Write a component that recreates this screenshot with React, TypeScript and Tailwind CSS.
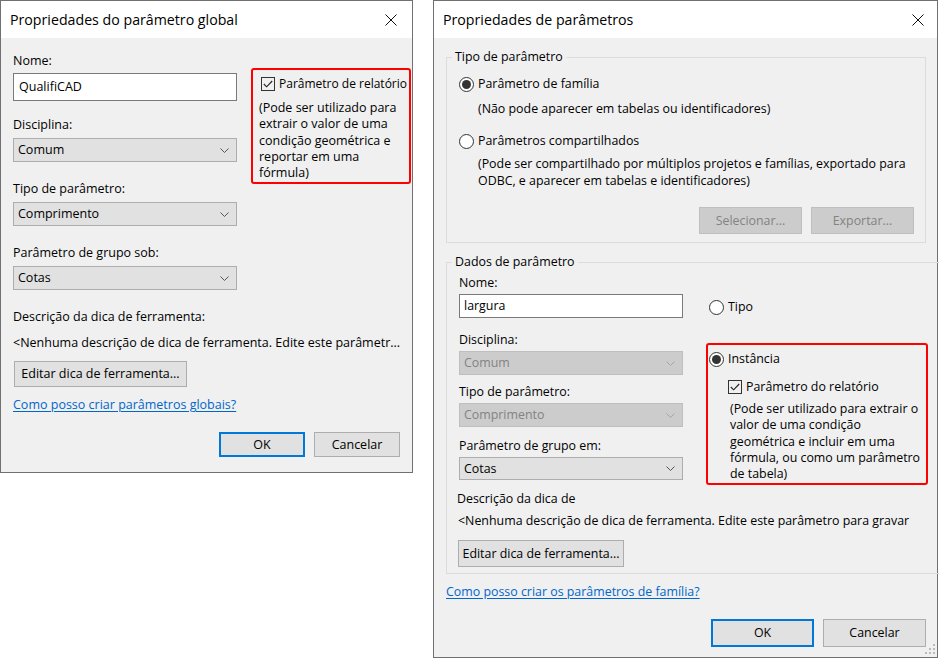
import cx from 'clsx';
import type { ReactNode } from 'react';

const CloseIcon = () => (
  <svg width="12" height="12" viewBox="0 0 12 12" fill="none" stroke="#111" strokeWidth="1">
    <path d="M0.5 0.5 11.5 11.5M11.5 0.5 0.5 11.5" />
  </svg>
);

const TitleBar = ({ title, pr }: { title: string; pr: string }) => (
  <div className={cx('flex h-[37px] shrink-0 items-center justify-between bg-white pl-[9px] text-[14.2px]', pr)}>
    <span>{title}</span>
    <CloseIcon />
  </div>
);

const Checkbox = () => (
  <span className="flex h-[14px] w-[14px] shrink-0 items-center justify-center border border-[#333]">
    <svg width="10" height="8" viewBox="0 0 10 8" fill="none" stroke="#222" strokeWidth="1.1">
      <path d="M0.8 4 3.6 6.8 9.2 1" />
    </svg>
  </span>
);

const Radio = ({ checked }: { checked?: boolean }) => (
  <span className="flex h-[15px] w-[15px] shrink-0 items-center justify-center rounded-full border border-[#333] bg-white">
    {checked && <span className="h-[9px] w-[9px] rounded-full bg-[#333]" />}
  </span>
);

const Chevron = ({ disabled }: { disabled?: boolean }) => (
  <svg width="9" height="5" viewBox="0 0 9 5" fill="none" stroke={disabled ? '#a6a6a6' : '#555'} strokeWidth="1">
    <path d="M0.5 0.5 4.5 4.5 8.5 0.5" />
  </svg>
);

interface SelectProps {
  value: string;
  disabled?: boolean;
  className?: string;
}

const Select = ({ value, disabled, className }: SelectProps) => (
  <div
    className={cx(
      'flex items-center justify-between border pl-[4px] pr-[7px]',
      disabled ? 'border-[#bfbfbf] bg-[#cccccc] text-[#838383]' : 'border-[#adadad] bg-[#e1e1e1]',
      className,
    )}
  >
    <span>{value}</span>
    <Chevron disabled={disabled} />
  </div>
);

interface ButtonProps {
  children: ReactNode;
  primary?: boolean;
  disabled?: boolean;
  className?: string;
}

const Button = ({ children, primary, disabled, className }: ButtonProps) => (
  <div
    className={cx(
      'flex items-center justify-center',
      primary && 'border-2 border-[#0078d7] bg-[#e1e1e1]',
      disabled && 'border border-[#bfbfbf] bg-[#cccccc] text-[#838383]',
      !primary && !disabled && 'border border-[#adadad] bg-[#e1e1e1]',
      className,
    )}
  >
    {children}
  </div>
);

const Link = ({ children, className }: { children: ReactNode; className?: string }) => (
  <p className={cx('text-[#0066cc] underline underline-offset-2', className)}>{children}</p>
);

// fixed line breaks, as the dialog wraps them
const Lines = ({ lines, className }: { lines: string[]; className?: string }) => (
  <div className={cx('whitespace-nowrap', className)}>
    {lines.map((line) => (
      <p key={line}>{line}</p>
    ))}
  </div>
);

const ResizeGrip = () => (
  <svg width="10" height="10" viewBox="0 0 10 10" className="absolute bottom-[3px] right-[2px]" fill="#bcbcbc">
    <rect x="8" y="0" width="2" height="2" />
    <rect x="4" y="4" width="2" height="2" />
    <rect x="8" y="4" width="2" height="2" />
    <rect x="0" y="8" width="2" height="2" />
    <rect x="4" y="8" width="2" height="2" />
    <rect x="8" y="8" width="2" height="2" />
  </svg>
);

const GlobalParamDialog = () => (
  <div className="flex h-[473px] w-[413px] shrink-0 flex-col border border-[#707070] bg-[#f0f0f0]">
    <TitleBar title="Propriedades do parâmetro global" pr="pr-[15px]" />
    <div className="flex flex-col pl-[12px] pr-[1px]">
      <div className="flex items-start">
        <div className="flex w-[224px] shrink-0 flex-col">
          <p className="mt-[15px]">Nome:</p>
          <div className="mt-[4px] flex h-[28px] items-center border border-[#7a7a7a] bg-white pl-[5px]">QualifiCAD</div>
          <p className="mt-[16px]">Disciplina:</p>
          <Select value="Comum" className="mt-[5px] h-[24px]" />
          <p className="mt-[19px]">Tipo de parâmetro:</p>
          <Select value="Comprimento" className="mt-[5px] h-[24px]" />
          <p className="mt-[19px]">Parâmetro de grupo sob:</p>
          <Select value="Cotas" className="mt-[5px] h-[24px]" />
        </div>
        <div className="ml-[14px] mt-[30px] h-[116px] w-[160px] shrink-0 overflow-hidden rounded-[3px] border-2 border-[#ff0000] pl-[6px] pt-[6px]">
          <div className="flex items-center gap-[4px] whitespace-nowrap pl-[2px] text-[12px]">
            <Checkbox />
            <span>Parâmetro de relatório</span>
          </div>
          <Lines
            className="mt-[8px] leading-[16.25px]"
            lines={['(Pode ser utilizado para', 'extrair o valor de uma', 'condição geométrica e', 'reportar em uma', 'fórmula)']}
          />
        </div>
      </div>
      <p className="mt-[19px]">Descrição da dica de ferramenta:</p>
      <p className="mt-[10px] whitespace-nowrap">
        &lt;Nenhuma descrição de dica de ferramenta. Edite este parâmetr...
      </p>
      <Button className="ml-[1px] mt-[10px] h-[26px] w-[173px]">Editar dica de ferramenta...</Button>
      <Link className="mt-[10px]">Como posso criar parâmetros globais?</Link>
      <div className="mt-[19px] flex justify-end gap-[9px] pr-[11px]">
        <Button primary className="h-[25px] w-[86px]">
          OK
        </Button>
        <Button className="h-[25px] w-[86px]">Cancelar</Button>
      </div>
    </div>
  </div>
);

const FamilyParamDialog = () => (
  <div className="relative flex h-[658px] w-[505px] shrink-0 flex-col border border-[#707070] bg-[#f0f0f0] text-[12.4px]">
    <TitleBar title="Propriedades de parâmetros" pr="pr-[13px]" />
    <div className="flex flex-col pl-[12px] pr-[11px]">
      <fieldset className="mt-[11px] border border-[#dcdcdc] pb-[8px] pl-[12px] pr-[11px]">
        <legend className="-ml-[7px] px-[3px]">Tipo de parâmetro</legend>
        <div className="mt-[11px] flex items-center gap-[4px]">
          <Radio checked />
          <span>Parâmetro de família</span>
        </div>
        <p className="mt-[9px] pl-[19px]">(Não pode aparecer em tabelas ou identificadores)</p>
        <div className="mt-[16px] flex items-center gap-[4px]">
          <Radio />
          <span>Parâmetros compartilhados</span>
        </div>
        <Lines
          className="mt-[6px] pl-[19px] leading-[17px]"
          lines={[
            '(Pode ser compartilhado por múltiplos projetos e famílias, exportado para',
            'ODBC, e aparecer em tabelas e identificadores)',
          ]}
        />
        <div className="mt-[18px] flex justify-end gap-[9px]">
          <Button disabled className="h-[27px] w-[103px]">
            Selecionar...
          </Button>
          <Button disabled className="h-[27px] w-[103px]">
            Exportar...
          </Button>
        </div>
      </fieldset>

      <fieldset className="mt-[11px] border border-[#dcdcdc] pb-[6px] pl-[12px] pr-[11px]">
        <legend className="-ml-[7px] px-[3px]">Dados de parâmetro</legend>
        <div className="flex items-start">
          <div className="flex w-[224px] shrink-0 flex-col">
            <p className="mt-[5px]">Nome:</p>
            <div className="mt-[3px] flex h-[24px] items-center border border-[#7a7a7a] bg-white pl-[4px]">largura</div>
            <p className="mt-[14px]">Disciplina:</p>
            <Select disabled value="Comum" className="mt-[3px] h-[24px]" />
            <p className="mt-[9px]">Tipo de parâmetro:</p>
            <Select disabled value="Comprimento" className="mt-[3px] h-[24px]" />
            <p className="mt-[11px]">Parâmetro de grupo em:</p>
            <Select value="Cotas" className="mt-[3px] h-[23px]" />
          </div>
          <div className="ml-[23px] flex shrink-0 flex-col">
            <div className="mt-[29px] flex items-center gap-[4px] pl-[3px]">
              <Radio />
              <span>Tipo</span>
            </div>
            <div className="mt-[28px] h-[142px] w-[222px] rounded-[3px] border-2 border-[#ff0000] pl-[1px] pt-[6px]">
              <div className="flex items-center gap-[4px]">
                <Radio checked />
                <span>Instância</span>
              </div>
              <div className="mt-[12px] flex items-center gap-[4px] pl-[19px]">
                <Checkbox />
                <span>Parâmetro do relatório</span>
              </div>
              <Lines
                className="mt-[6px] pl-[21px] leading-[16.25px]"
                lines={[
                  '(Pode ser utilizado para extrair o',
                  'valor de uma condição',
                  'geométrica e incluir em uma',
                  'fórmula, ou como um parâmetro',
                  'de tabela)',
                ]}
              />
            </div>
          </div>
        </div>
        <p className="-ml-[2px] mt-[6px]">Descrição da dica de</p>
        <p className="-ml-[1px] mt-[6px] overflow-hidden whitespace-nowrap">
          &lt;Nenhuma descrição de dica de ferramenta. Edite este parâmetro para gravar
        </p>
        <Button className="-ml-[1px] mt-[11px] h-[27px] w-[166px]">Editar dica de ferramenta...</Button>
      </fieldset>

      <Link className="mt-[10px]">Como posso criar os parâmetros de família?</Link>
      <div className="mt-[19px] flex justify-end gap-[9px]">
        <Button primary className="h-[28px] w-[103px]">
          OK
        </Button>
        <Button className="h-[28px] w-[103px]">Cancelar</Button>
      </div>
    </div>
    <ResizeGrip />
  </div>
);

const App = () => (
  <div className="flex h-[659px] w-[939px] items-start gap-[20px] overflow-hidden bg-white font-['Segoe_UI','Open_Sans',sans-serif] text-[12.5px] leading-[16px] text-black">
    <GlobalParamDialog />
    <FamilyParamDialog />
  </div>
);

export default App;
